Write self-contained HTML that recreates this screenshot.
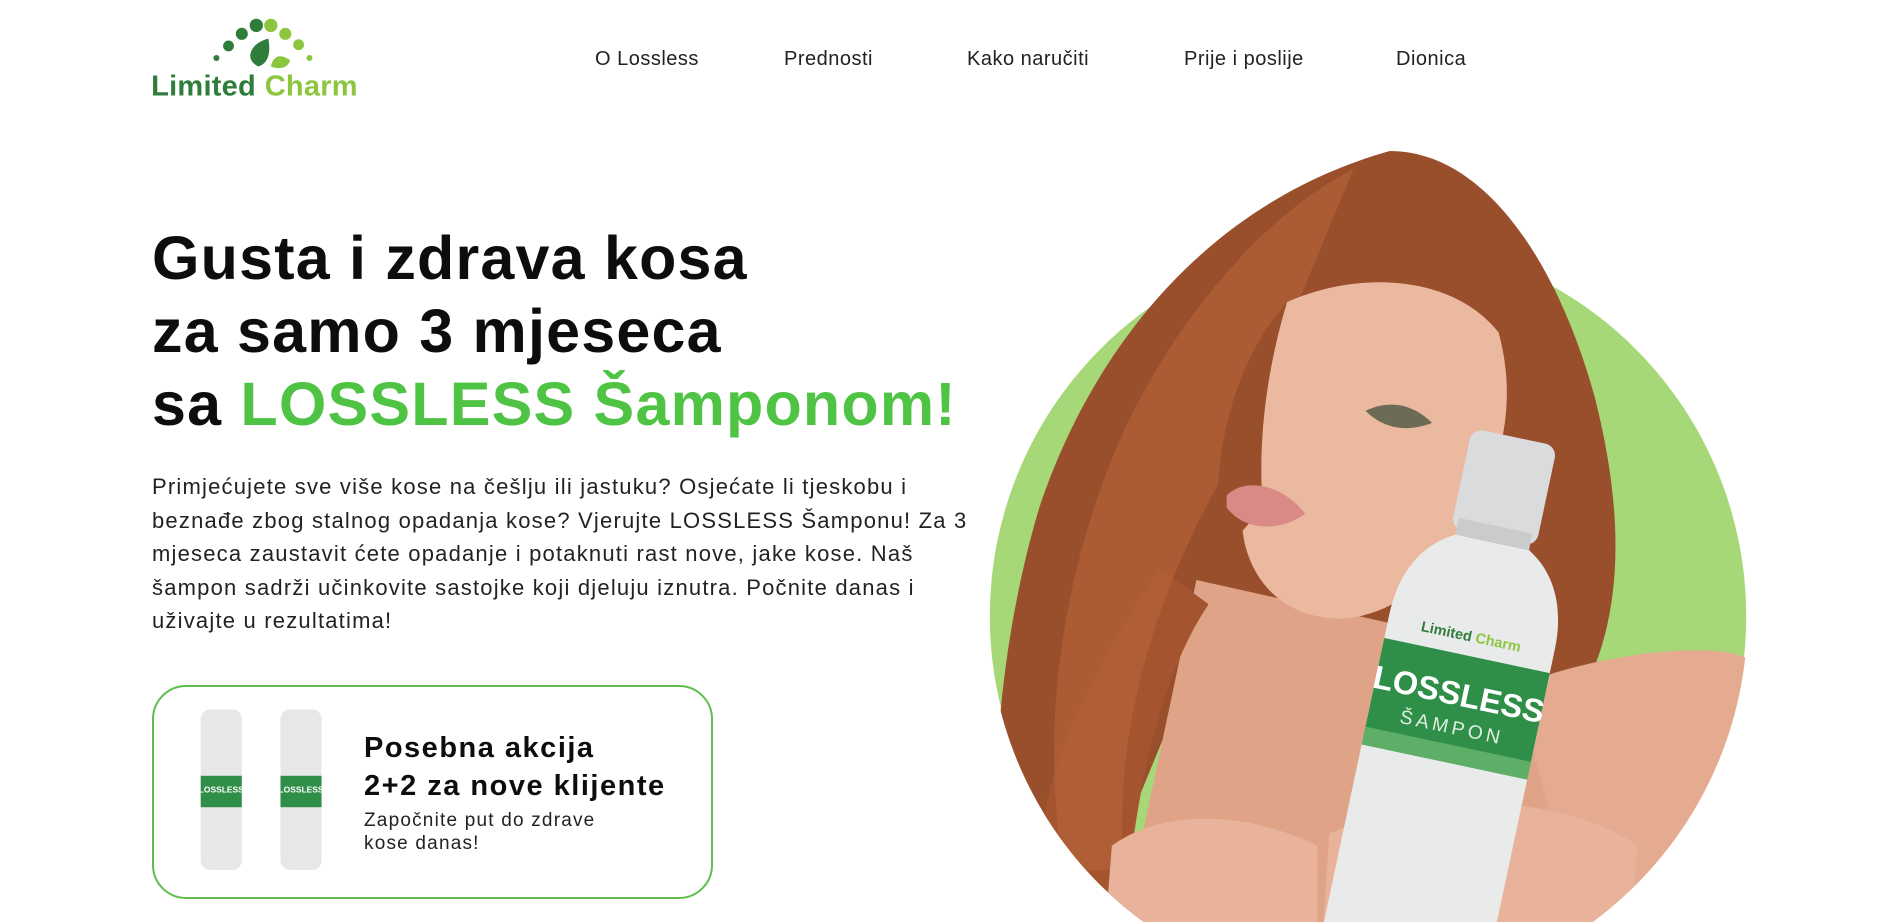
<!DOCTYPE html>
<html><head><meta charset="utf-8"><style>
*{margin:0;padding:0;box-sizing:border-box}
html,body{width:1895px;height:922px;overflow:hidden}
body{background:#fff;font-family:"Liberation Sans",sans-serif;position:relative;color:#111}
.nav a{position:absolute;top:48px;font-size:20px;color:#222;text-decoration:none;letter-spacing:0.5px}
h1{position:absolute;left:152px;top:222px;font-size:61px;line-height:73px;font-weight:bold;color:#0d0d0d;letter-spacing:1.2px;white-space:nowrap}
h1 span{color:#4fc343}
p.lead{position:absolute;left:152px;top:470px;font-size:22px;line-height:33.5px;color:#222;letter-spacing:1.2px;white-space:nowrap}
.box{position:absolute;left:152px;top:685px;width:561px;height:214px;border:2px solid #5fbe4f;border-radius:34px}
.box h3{position:absolute;left:210px;top:42px;font-size:29px;line-height:38px;font-weight:bold;color:#0d0d0d;letter-spacing:1.5px;white-space:nowrap}
.box .s{position:absolute;left:210px;top:122px;font-size:19px;line-height:23px;color:#222;letter-spacing:1.2px;white-space:nowrap}
svg.art{position:absolute;left:0;top:0}
</style></head><body>
<svg class="art" width="1895" height="922" viewBox="0 0 1568 763">
<g>
<circle cx="179" cy="48" r="2.5" fill="#2f7d3a"/>
<circle cx="189" cy="38" r="4.5" fill="#2f7d3a"/>
<circle cx="200" cy="28" r="5" fill="#2f7d3a"/>
<circle cx="212" cy="21" r="5.5" fill="#2f7d3a"/>
<circle cx="224" cy="21" r="5.5" fill="#8cc63f"/>
<circle cx="236" cy="28" r="5" fill="#8cc63f"/>
<circle cx="247" cy="37" r="4.5" fill="#8cc63f"/>
<circle cx="256" cy="48" r="2.5" fill="#8cc63f"/>
<path d="M214 55 C202 50 206 36 222 32 C224 44 222 52 214 55Z" fill="#2f7d3a"/>
<path d="M224 55 C226 46 232 44 240 50 C238 56 232 58 224 55Z" fill="#8cc63f"/>
<text x="125" y="79" font-family="Liberation Sans" font-weight="bold" font-size="24" fill="#2f7d3a" letter-spacing="0.2">Limited</text>
<text x="219" y="79" font-family="Liberation Sans" font-weight="bold" font-size="24" fill="#8cc63f" letter-spacing="0.2">Charm</text>
</g>
<defs><clipPath id="c"><path d="M818 0 H1446 V510 A313 313 0 0 1 818 510 Z"/></clipPath></defs>
<circle cx="1132" cy="510" r="313" fill="#a6d878"/>
<g clip-path="url(#c)">
<path d="M1150 125 C1230 125 1290 220 1320 330 C1345 430 1345 520 1300 590 L1180 600 L1000 520 L900 763 L830 763 C815 650 830 520 860 420 C900 300 990 170 1150 125Z" fill="#9a4f2c"/>
<path d="M990 480 L1260 540 L1320 763 L930 763Z" fill="#dfa487"/>
<path d="M1000 500 C960 560 940 650 930 763 L860 763 C850 650 900 560 960 470Z" fill="#a4552f"/>
<path d="M1120 140 C1040 180 960 280 920 380 C880 480 860 600 880 720 L930 720 C920 600 960 480 1020 380Z" fill="#b36237" opacity="0.7"/>
<path d="M1065 250 C1120 225 1200 225 1240 275 C1255 330 1245 380 1215 440 C1190 480 1150 510 1110 512 C1070 512 1040 490 1030 450 C1020 400 1030 330 1065 250Z" fill="#eab9a0"/>
<path d="M1065 250 C1050 300 1040 360 1045 420 L1010 460 C1000 380 1020 300 1065 250Z" fill="#9a4f2c"/>
<path d="M1015 410 C1030 395 1060 400 1080 425 C1060 440 1030 440 1015 420Z" fill="#d98a86"/>
<path d="M1130 340 C1150 330 1170 335 1185 350 C1165 358 1145 355 1130 340Z" fill="#6d6a55"/>
<path d="M1250 570 C1320 540 1420 530 1446 545 L1446 763 L1300 763 C1290 690 1270 620 1250 570Z" fill="#e4ab91"/>
<path d="M920 700 C960 670 1030 670 1090 700 L1090 763 L915 763Z" fill="#e8b39a"/>
<path d="M1100 690 C1180 650 1300 660 1355 700 L1350 763 L1095 763Z" fill="#e8b39a"/>
<g transform="rotate(12 1200 560)">
<rect x="1175" y="355" width="72" height="85" rx="10" fill="#d9dbdc"/>
<rect x="1180" y="430" width="62" height="14" fill="#c9cbcc"/>
<path d="M1180 444 L1242 444 C1270 460 1280 490 1280 520 L1280 800 L1140 800 L1140 520 C1140 490 1150 460 1180 444Z" fill="#e9eaea"/>
<rect x="1140" y="540" width="140" height="90" fill="#2f8f49"/>
<rect x="1140" y="615" width="140" height="15" fill="#5fae68"/>
<text x="1210" y="582" text-anchor="middle" font-family="Liberation Sans" font-weight="bold" font-size="27" fill="#fff">LOSSLESS</text>
<text x="1210" y="606" text-anchor="middle" font-family="Liberation Sans" font-size="16" fill="#dfeee0" letter-spacing="3">ŠAMPON</text>
<text x="1210" y="528" text-anchor="middle" font-family="Liberation Sans" font-weight="bold" font-size="12" fill="#2f7d3a">Limited <tspan fill="#8cc63f">Charm</tspan></text>
</g>
</g>
<g>
<rect x="166" y="587" width="34" height="133" rx="8" fill="#e6e7e7"/>
<rect x="166" y="642" width="34" height="26" fill="#2f8f49"/>
<text x="183" y="656" text-anchor="middle" font-size="7" font-weight="bold" fill="#fff" font-family="Liberation Sans">LOSSLESS</text>
<rect x="232" y="587" width="34" height="133" rx="8" fill="#e6e7e7"/>
<rect x="232" y="642" width="34" height="26" fill="#2f8f49"/>
<text x="249" y="656" text-anchor="middle" font-size="7" font-weight="bold" fill="#fff" font-family="Liberation Sans">LOSSLESS</text>
</g>
</svg>
<div class="nav">
<a style="left:595px">O Lossless</a>
<a style="left:784px">Prednosti</a>
<a style="left:967px">Kako naručiti</a>
<a style="left:1184px">Prije i poslije</a>
<a style="left:1396px">Dionica</a>
</div>
<h1>Gusta i zdrava kosa<br>za samo 3 mjeseca<br>sa <span>LOSSLESS Šamponom!</span></h1>
<p class="lead">Primjećujete sve više kose na češlju ili jastuku? Osjećate li tjeskobu i<br>beznađe zbog stalnog opadanja kose? Vjerujte LOSSLESS Šamponu! Za 3<br>mjeseca zaustavit ćete opadanje i potaknuti rast nove, jake kose. Naš<br>šampon sadrži učinkovite sastojke koji djeluju iznutra. Počnite danas i<br>uživajte u rezultatima!</p>
<div class="box">
<h3>Posebna akcija<br>2+2 za nove klijente</h3>
<div class="s">Započnite put do zdrave<br>kose danas!</div>
</div>
</body></html>
